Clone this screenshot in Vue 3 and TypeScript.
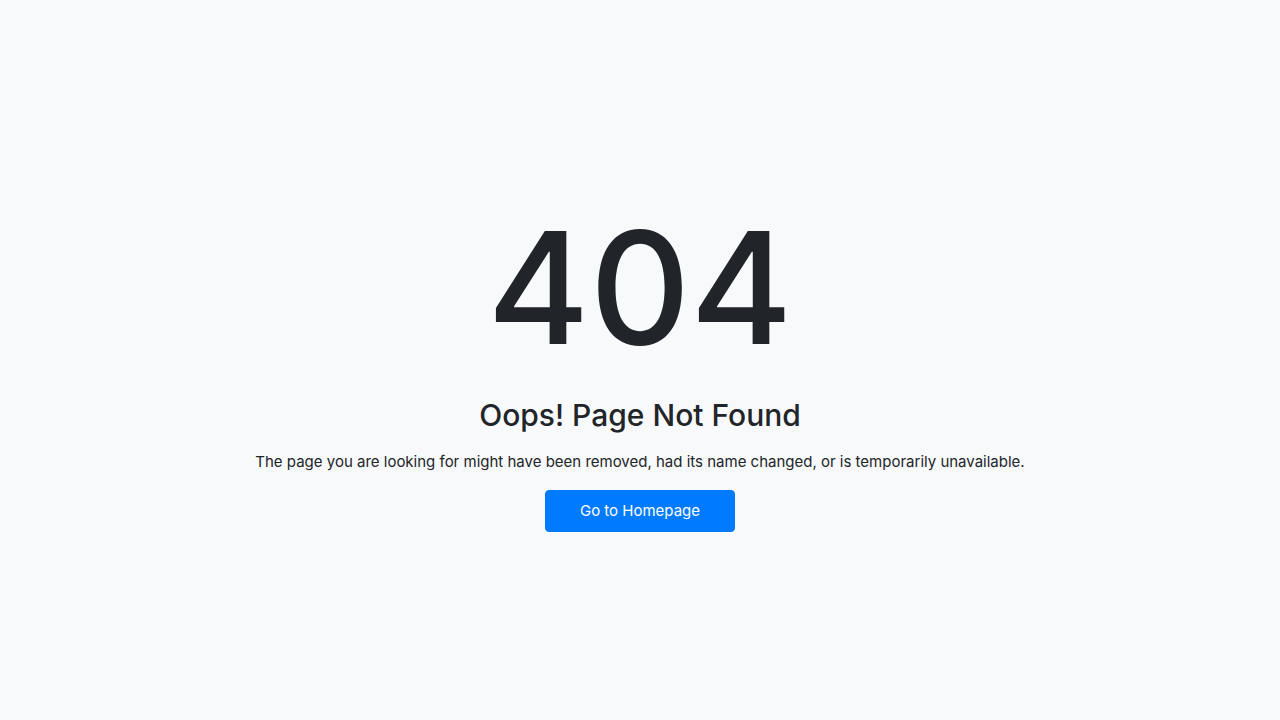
<script setup lang="ts">
const code: string = '404'
const heading: string = 'Oops! Page Not Found'
</script>

<template>
  <main class="page">
    <div class="content">
      <h1 class="code">{{ code }}</h1>
      <h2 class="heading">{{ heading }}</h2>
      <p class="message">
        The page you are looking for might have been removed, had its name changed, or is temporarily unavailable.
      </p>
      <a class="home-link" href="/">Go to Homepage</a>
    </div>
  </main>
</template>

<style>
body {
  margin: 0;
  background: #f8f9fa;
}
</style>

<style scoped>
.page {
  display: flex;
  align-items: center;
  justify-content: center;
  min-height: 100vh;
  background: #f8f9fa;
  color: #212529;
  font-family: Inter, "Liberation Sans", sans-serif;
  font-size: 15px;
  line-height: 24px;
  text-align: center;
}

.code {
  margin: 0 0 8px;
  font-size: 156px;
  font-weight: 500;
  line-height: 200px;
}

.heading {
  margin: 0 0 16px;
  font-size: 30px;
  font-weight: 500;
  line-height: 38px;
}

.message {
  margin: 0 0 16px;
}

.home-link {
  display: inline-block;
  padding: 8px 34px;
  border: 1px solid #007bff;
  border-radius: 4px;
  background: #007bff;
  color: #fff;
  text-decoration: none;
}
</style>
